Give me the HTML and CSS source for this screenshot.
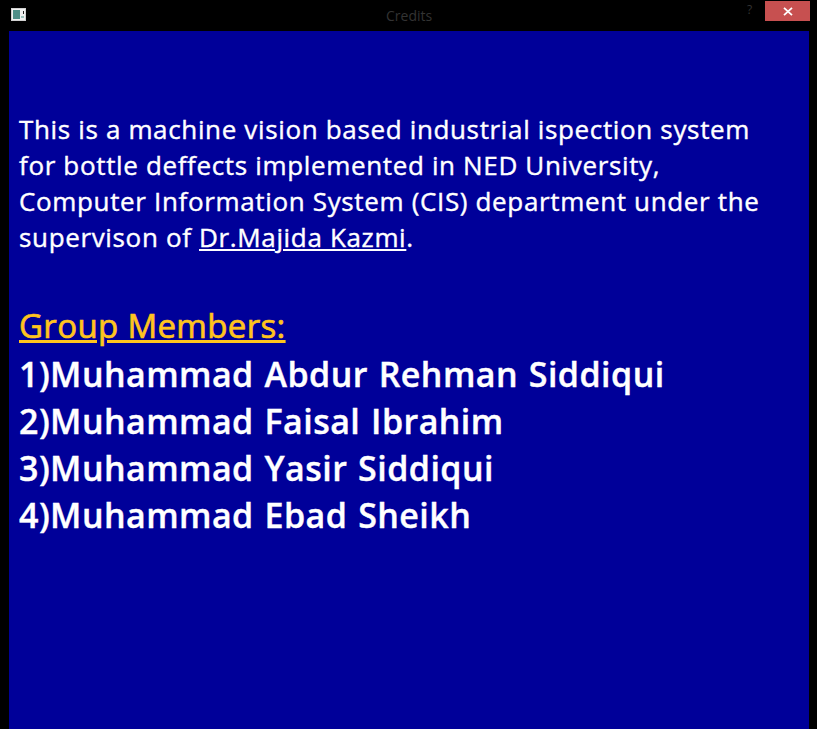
FILE: index.html

```html
<!DOCTYPE html>
<html lang="en">
<head>
    <meta charset="UTF-8">
    <meta name="viewport" content="width=device-width, initial-scale=1.0">
    <title>Credits</title>
    <link rel="stylesheet" href="styles.css">
</head>
<body>
    <div class="window">
        <div class="titlebar">
            <div class="app-icon">
                <svg width="15" height="13" viewBox="0 0 15 13">
                    <rect x="0.5" y="0.5" width="14" height="12" fill="#f2f2f2" stroke="#d0d0d0"/>
                    <rect x="2" y="2" width="7" height="9" fill="#4f8f88"/>
                    <rect x="10" y="8" width="3" height="2" fill="#9cc4c0"/>
                    <rect x="12" y="3" width="1" height="3" fill="#222"/>
                </svg>
            </div>
            <div class="title">Credits</div>
            <div class="help">?</div>
            <div class="close">
                <svg width="10" height="9" viewBox="0 0 10 9">
                    <path d="M1 0.8 L9 8.2 M9 0.8 L1 8.2" stroke="#fff" stroke-width="1.8" fill="none"/>
                </svg>
            </div>
        </div>
        <div class="content">
            <p class="intro">This is a machine vision based industrial ispection system<br>
            for bottle deffects implemented in NED University,<br>
            Computer Information System (CIS) department under the<br>
            supervison of <u>Dr.Majida Kazmi</u>.</p>
            <h2 class="members-title"><u>Group Members:</u></h2>
            <ul class="members">
                <li>1)Muhammad Abdur Rehman Siddiqui</li>
                <li>2)Muhammad Faisal Ibrahim</li>
                <li>3)Muhammad Yasir Siddiqui</li>
                <li>4)Muhammad Ebad Sheikh</li>
            </ul>
        </div>
    </div>
</body>
</html>
```

FILE: styles.css

```css
html, body {
    margin: 0;
    height: 100%;
    background: #000;
    overflow: hidden;
}
.window {
    height: 729px;
    display: flex;
    flex-direction: column;
    padding: 0 8px 0 9px;
    font-family: "Open Sans", "Noto Sans", sans-serif;
}
.titlebar {
    height: 31px;
    flex: none;
    display: flex;
    position: relative;
}
.app-icon {
    position: absolute;
    left: 2px;
    top: 8px;
    line-height: 0;
}
.title {
    position: absolute;
    left: 377px;
    top: 6px;
    font-size: 14px;
    line-height: 19px;
    color: #333;
}
.help {
    position: absolute;
    left: 738px;
    top: 2px;
    font-size: 12px;
    line-height: 16px;
    color: #333;
}
.close {
    position: absolute;
    left: 756px;
    top: 1px;
    width: 45px;
    height: 20px;
    background: #c75050;
    display: flex;
    align-items: center;
    justify-content: center;
}
.content {
    flex: 1;
    background: #000099;
    color: #fff;
    padding: 80px 10px 0;
}
.intro {
    margin: 0 0 47px;
    font-size: 26px;
    line-height: 36px;
    letter-spacing: 0.65px;
    -webkit-text-stroke: 0.4px #fff;
}
.members-title {
    margin: 0;
    font-size: 33px;
    line-height: 47px;
    font-weight: 400;
    letter-spacing: 0.35px;
    -webkit-text-stroke: 0.7px #ffc41e;
    color: #ffc41e;
}
.members {
    margin: 2px 0 0;
    padding: 0;
    list-style: none;
    font-size: 34px;
    line-height: 47px;
    font-weight: 600;
    letter-spacing: 0.45px;
    word-spacing: 1.5px;
    -webkit-text-stroke: 0.4px #fff;
}
```
